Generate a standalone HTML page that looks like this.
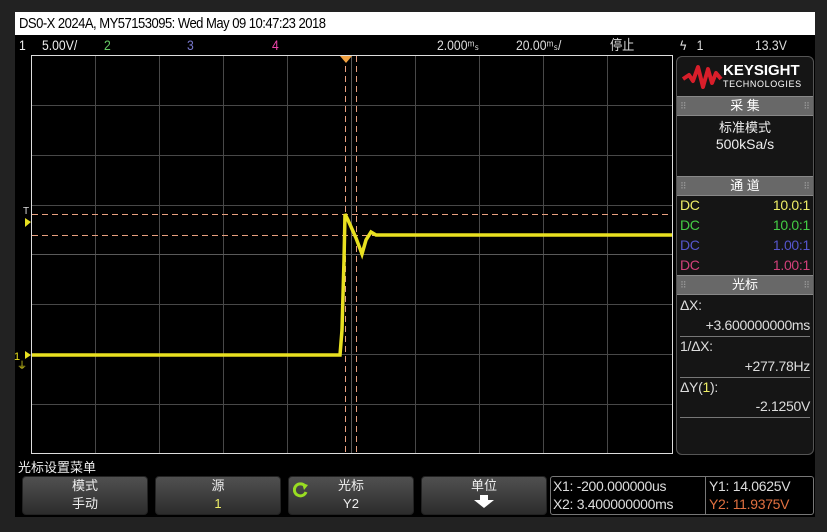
<!DOCTYPE html>
<html><head><meta charset="utf-8"><style>
body{margin:0;width:827px;height:532px;background:#222;overflow:hidden;position:relative;font-family:"Liberation Sans","Noto Sans CJK SC",sans-serif;color:#ddd}
.a{position:absolute;white-space:nowrap}
.n{display:inline-block;transform:scaleX(0.87);transform-origin:left center}
.title{left:15px;top:12px;width:800px;height:23px;background:#fff;color:#000;font-size:15px;line-height:23px;letter-spacing:-0.6px}
.blk{left:15px;top:35px;width:800px;height:482px;background:#000}
.st{font-size:14px;top:35px;line-height:20px;color:#ddd;transform:scaleX(0.87);transform-origin:left center}
.panel{left:676px;top:56px;width:136px;height:397px;border:1px solid #555;border-radius:6px;background:#151515;overflow:hidden}
.hd{position:absolute;left:0;width:136px;height:18px;background:#686868;color:#fff;text-align:center;font-size:13px;line-height:18px;border-top:1px solid #888;border-bottom:1px solid #888}
.hd:before{content:"⠿";position:absolute;left:3px;color:#999;font-size:9px}
.hd:after{content:"⠿";position:absolute;right:3px;color:#999;font-size:9px}
.row{position:absolute;left:3px;width:130px;font-size:14px;line-height:20px;letter-spacing:-0.3px}
.row span{float:right}
.btn{top:476px;height:37px;width:124px;border-radius:4px;background:linear-gradient(#505050,#2c2c2c);border:1px solid #222;text-align:center;font-size:13px;line-height:18px;color:#eee}
.sep{position:absolute;left:3px;width:130px;height:1px;background:#777}
</style></head><body>
<div class="a title">&nbsp;<span class="n">DS0-X 2024A, MY57153095: Wed May 09 10:47:23 2018</span></div>
<div class="a blk"></div>
<div class="a st" style="left:19px;color:#eee">1</div>
<div class="a st" style="left:42px;color:#eee">5.00V/</div>
<div class="a st" style="left:104px;color:#6c6">2</div>
<div class="a st" style="left:187px;color:#77c">3</div>
<div class="a st" style="left:272px;color:#e4a">4</div>
<div class="a st" style="left:437px">2.000ᵐₛ</div>
<div class="a st" style="left:516px">20.00ᵐₛ/</div>
<div class="a st" style="left:610px">停止</div>
<div class="a st" style="left:680px">ϟ&nbsp;&nbsp;&nbsp;1</div>
<div class="a st" style="left:755px">13.3V</div>
<svg class="a" style="left:0;top:0" width="827" height="532">
<g stroke="#484848" stroke-width="1">
<line x1="95.5" y1="55" x2="95.5" y2="454"/><line x1="159.5" y1="55" x2="159.5" y2="454"/><line x1="223.5" y1="55" x2="223.5" y2="454"/><line x1="287.5" y1="55" x2="287.5" y2="454"/><line x1="415.5" y1="55" x2="415.5" y2="454"/><line x1="479.5" y1="55" x2="479.5" y2="454"/><line x1="543.5" y1="55" x2="543.5" y2="454"/><line x1="607.5" y1="55" x2="607.5" y2="454"/>
<line x1="31" y1="105.5" x2="672" y2="105.5"/><line x1="31" y1="155.5" x2="672" y2="155.5"/><line x1="31" y1="205.5" x2="672" y2="205.5"/><line x1="31" y1="304.5" x2="672" y2="304.5"/><line x1="31" y1="354.5" x2="672" y2="354.5"/><line x1="31" y1="404.5" x2="672" y2="404.5"/>
<line x1="31" y1="254.5" x2="672" y2="254.5" stroke="#5a5a5a"/><line x1="351.5" y1="55" x2="351.5" y2="454" stroke="#5a5a5a"/>
</g>
<rect x="31.5" y="55.5" width="641" height="398" fill="none" stroke="#ddd" stroke-width="1"/>
<g stroke="#e8a080" stroke-width="1" stroke-dasharray="6,4">
<line x1="345.5" y1="56" x2="345.5" y2="454"/><line x1="356.5" y1="56" x2="356.5" y2="454"/>
<line x1="32" y1="214.5" x2="672" y2="214.5"/><line x1="32" y1="235.5" x2="672" y2="235.5"/>
</g>
<polygon points="340,56 352,56 346,63" fill="#f0a040"/>
<polyline points="32,355 340,355 342,330 344,260 345,214 348,220 356,238 362,254 366,240 371,232 376,235 672,235" fill="none" stroke="#e8e020" stroke-width="3.5"/>
<polygon points="25,218 31,222 25,227" fill="#e8e020"/>
<text x="23" y="214" fill="#ddd" font-size="10" font-family="Liberation Sans">T</text>
<polygon points="25,351 31,355 25,359" fill="#e8e020"/>
<text x="14" y="360" fill="#e8e020" font-size="11" font-family="Liberation Sans">1</text>
<text x="17" y="369" fill="#e8e020" font-size="10">⏚</text>
</svg>
<div class="a panel">
 <svg style="position:absolute;left:4px;top:6px" width="44" height="28"><path d="M2 16 L8 12 L12 18 L17 4 L22 24 L27 6 L31 20 L35 10 L40 16" fill="none" stroke="#d81e2a" stroke-width="4" stroke-linejoin="round"/></svg>
 <div class="a" style="left:46px;top:5px;font-family:'Liberation Sans';font-weight:bold;font-size:15px;color:#fff">KEYSIGHT</div>
 <div class="a" style="left:46px;top:22px;font-family:'Liberation Sans';font-size:9px;color:#fff;letter-spacing:0.6px">TECHNOLOGIES</div>
 <div class="hd" style="top:39px">采 集</div>
 <div class="a" style="width:136px;text-align:center;top:60px;font-size:13px;color:#eee">标准模式</div>
 <div class="a" style="width:136px;text-align:center;top:79px;font-size:14px;color:#eee">500kSa/s</div>
 <div class="hd" style="top:119px">通 道</div>
 <div class="row" style="top:138px;color:#ee6">DC<span>10.0:1</span></div>
 <div class="row" style="top:158px;color:#4c4">DC<span>10.0:1</span></div>
 <div class="row" style="top:178px;color:#55c">DC<span>1.00:1</span></div>
 <div class="row" style="top:198px;color:#d2407a">DC<span>1.00:1</span></div>
 <div class="hd" style="top:218px">光标</div>
 <div class="row" style="top:238px">ΔX:</div>
 <div class="row" style="top:258px"><span>+3.600000000ms</span></div>
 <div class="sep" style="top:279px"></div>
 <div class="row" style="top:279px">1/ΔX:</div>
 <div class="row" style="top:299px"><span>+277.78Hz</span></div>
 <div class="sep" style="top:320px"></div>
 <div class="row" style="top:320px">ΔY(<b style="color:#ee6;font-weight:normal">1</b>):</div>
 <div class="row" style="top:339px"><span>-2.1250V</span></div>
 <div class="sep" style="top:360px"></div>
</div>
<div class="a" style="left:18px;top:457px;font-size:13px;color:#eee">光标设置菜单</div>
<div class="a btn" style="left:22px">模式<br>手动</div>
<div class="a btn" style="left:155px">源<br><span style="color:#ee6">1</span></div>
<div class="a btn" style="left:288px">光标<br>Y2<svg style="position:absolute;left:4px;top:5px" width="16" height="16"><path d="M12 4 A6 6 0 1 0 13 10" fill="none" stroke="#9d2" stroke-width="3"/><polygon points="9,1 15,3 11,8" fill="#9d2"/></svg></div>
<div class="a btn" style="left:421px">单位<br><svg width="24" height="14"><polygon points="8,0 16,0 16,5 22,5 12,13 2,5 8,5" fill="#fff"/></svg></div>
<div class="a" style="left:550px;top:476px;width:262px;height:37px;border:1px solid #777;border-radius:3px;font-size:14px;line-height:18px">
 <div class="a" style="left:2px;top:0;letter-spacing:-0.3px">X1: -200.000000us<br>X2: 3.400000000ms</div>
 <div class="a" style="left:154px;top:0;height:37px;border-left:1px solid #777;padding-left:3px;letter-spacing:-0.3px">Y1: 14.0625V<br><span style="color:#e07040">Y2: 11.9375V</span></div>
</div>
</body></html>
